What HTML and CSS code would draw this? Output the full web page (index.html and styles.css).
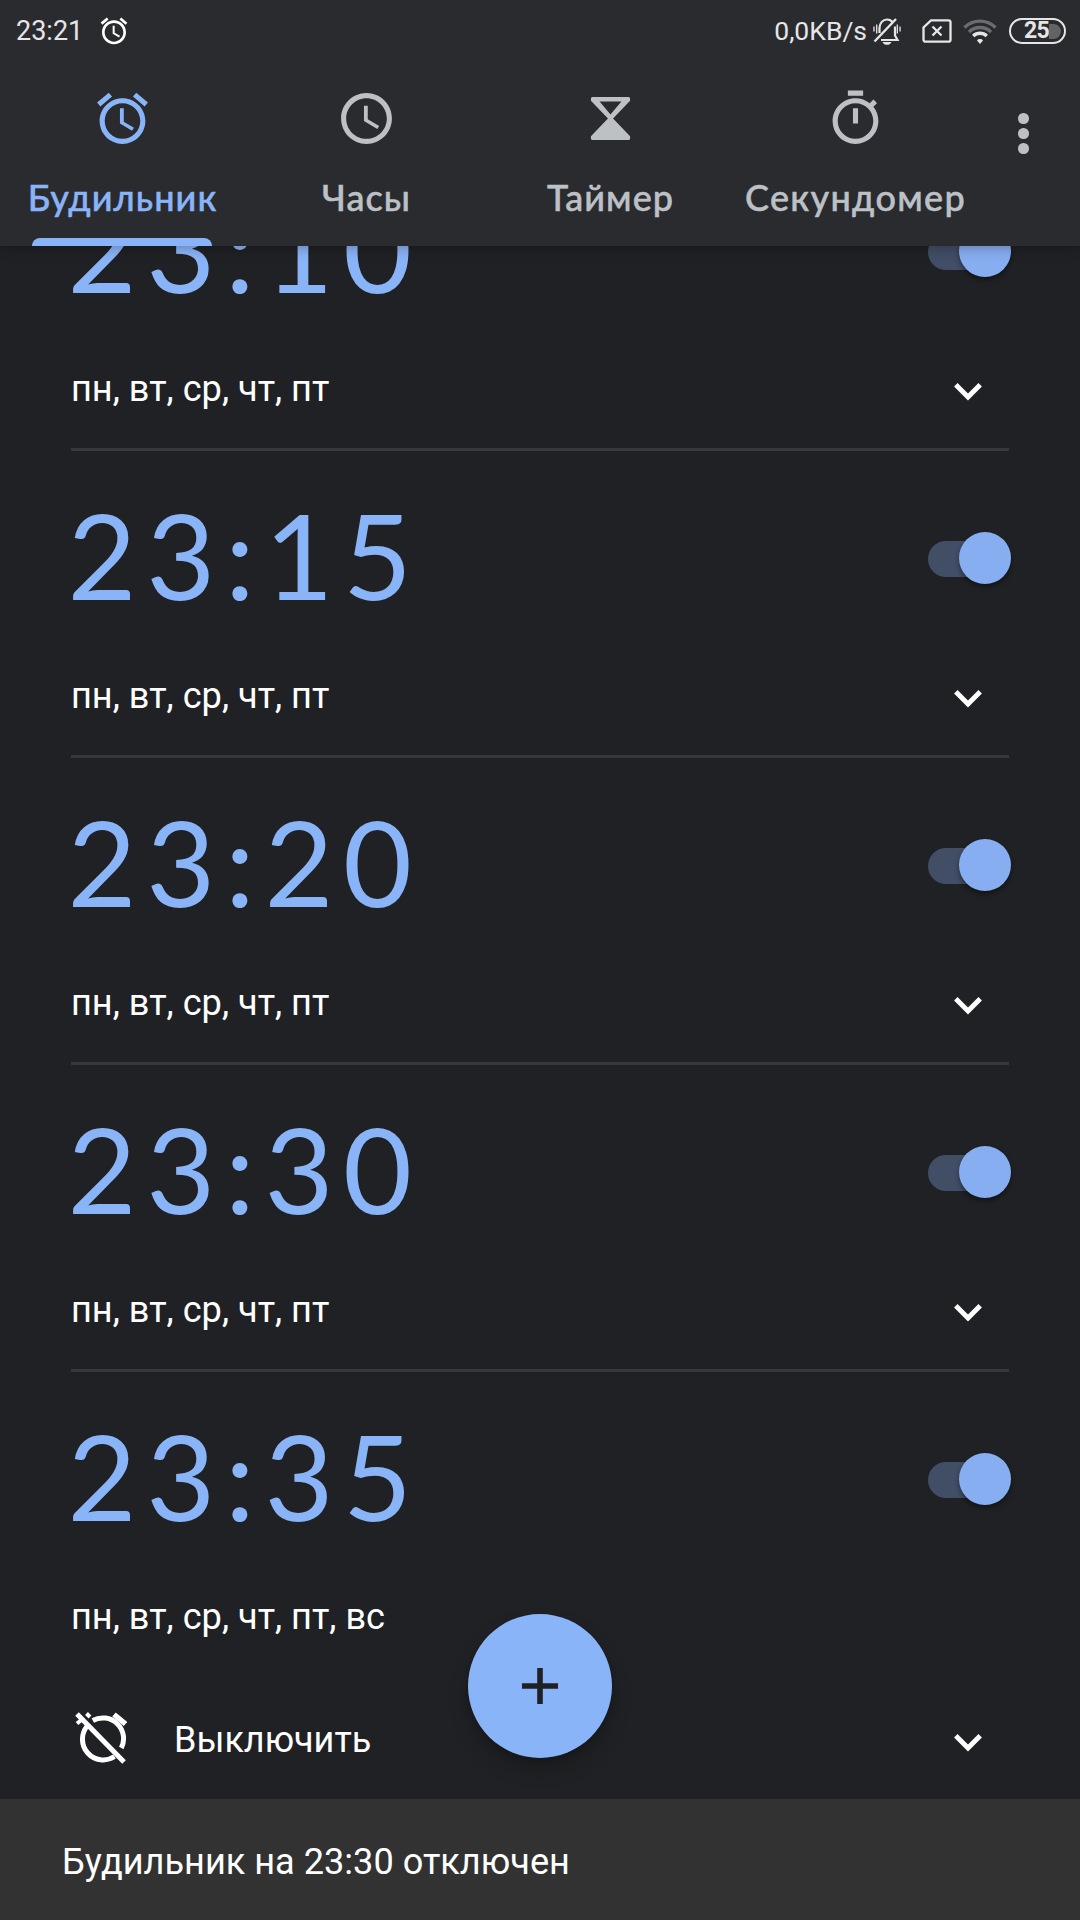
FILE: index.html
```html
<!DOCTYPE html>
<html lang="ru">
<head>
<meta charset="utf-8">
<title>Часы</title>
<link rel="stylesheet" href="styles.css">
</head>
<body>
<svg class="sprite" aria-hidden="true">
  <symbol id="alarm" viewBox="0 0 24 24"><path d="M22 5.72l-4.6-3.86-1.29 1.53 4.6 3.86L22 5.72zM7.88 3.39L6.6 1.86 2 5.71l1.29 1.53 4.59-3.85zM12.5 8H11v6l4.75 2.85.75-1.23-4-2.37V8zM12 4c-4.97 0-9 4.03-9 9s4.02 9 9 9c4.97 0 9-4.03 9-9s-4.03-9-9-9zm0 16c-3.87 0-7-3.13-7-7s3.13-7 7-7 7 3.13 7 7-3.13 7-7 7z"/></symbol>
  <symbol id="chevron" viewBox="0 0 28 18"><path d="M1.800 1.800L14 14L26.200 1.800" fill="none" stroke="currentColor" stroke-width="4.900"/></symbol>
</svg>
<div class="screen">
  <header class="header">
    <div class="status">
      <span class="status-time">23:21</span>
      <svg class="status-alarm"><use href="#alarm"/></svg>
      <span class="status-speed">0,0KB/s</span>
      <svg class="status-bell" viewBox="0 0 28 28" fill="none" stroke="currentColor" stroke-width="2.200">
        <path d="M6.500 16V11c0-5 3.500-8.500 7.500-8.500 2.500 0 4.500 1 6 3M22 9.500v9l2.500 4.500H8"/>
        <path d="M1.500 24.500L23 2" stroke-width="2.400"/>
        <path d="M1 9.500v5M3.700 7.500v9M24.300 7.500v9M27 9.500v5" stroke-width="1.300"/>
        <path d="M9.500 25h9c-1 2-2.500 2.800-4.500 2.800S10.500 27 9.500 25z" fill="currentColor" stroke="none"/>
      </svg>
      <svg class="status-sim" viewBox="0 0 30 24" fill="none" stroke="currentColor" stroke-width="2.300">
        <path d="M9 1.300h17.500a2 2 0 0 1 2 2v17.400a2 2 0 0 1-2 2h-23a2 2 0 0 1-2-2V8.500z"/>
        <path d="M10.500 7.500l9 9M19.500 7.500l-9 9"/>
      </svg>
      <svg class="status-wifi" viewBox="0 0 34 26" fill="none" stroke="currentColor" stroke-width="3.400">
        <path d="M1.500 9.500a22 22 0 0 1 31 0" opacity=".35"/>
        <path d="M6 14a15.600 15.600 0 0 1 22 0" opacity=".35"/>
        <path d="M10.200 18a9.800 9.800 0 0 1 13.600 0"/>
        <path d="M17 26l-3-3.500c1.500-1.900 4.500-1.900 6 0z" fill="currentColor" stroke="none"/>
      </svg>
      <span class="battery"><span class="battery-value">25</span><span class="battery-rest"></span></span>
    </div>
    <nav class="tabs">
      <a class="tab tab-active">
        <svg class="tab-icon"><use href="#alarm"/></svg>
        <span class="tab-label">Будильник</span>
      </a>
      <a class="tab">
        <svg class="tab-icon" viewBox="0 0 24 24"><path d="M11.990 2C6.470 2 2 6.480 2 12s4.470 10 9.990 10C17.520 22 22 17.520 22 12S17.520 2 11.990 2zM12 20c-4.420 0-8-3.580-8-8s3.580-8 8-8 8 3.580 8 8-3.580 8-8 8zm.5-13H11v6l5.250 3.150.750-1.230-4.500-2.670z"/></svg>
        <span class="tab-label">Часы</span>
      </a>
      <a class="tab">
        <svg class="tab-icon" viewBox="0 0 24 24"><path fill-rule="evenodd" d="M4.900 3.500h14.200q.6 0 .6.600v.9L13 12l6.700 7v.9q0 .6-.6.600H4.900q-.6 0-.6-.6V19L11 12 4.300 5v-.9q0-.6.600-.6zM7.700 5.300L12 10.400l4.300-5.100z"/></svg>
        <span class="tab-label">Таймер</span>
      </a>
      <a class="tab">
        <svg class="tab-icon" viewBox="0 0 24 24"><path d="M15 1H9v2h6V1zm-4 13h2V8h-2v6zm8.030-6.610l1.420-1.420c-.43-.51-.9-.99-1.410-1.410l-1.420 1.420C16.070 4.740 14.120 4 12 4c-4.970 0-9 4.030-9 9s4.020 9 9 9 9-4.030 9-9c0-2.120-.74-4.070-1.970-5.610zM12 20c-3.870 0-7-3.130-7-7s3.130-7 7-7 7 3.130 7 7-3.130 7-7 7z"/></svg>
        <span class="tab-label tab-label-wide">Секундомер</span>
      </a>
      <span class="more"><i></i><i></i><i></i></span>
    </nav>
  </header>

  <main class="list">
    <section class="alarm">
      <div class="alarm-main"><span class="time">23:10</span><span class="switch"><i class="thumb"></i></span></div>
      <div class="alarm-days"><span>пн, вт, ср, чт, пт</span><svg class="chevron"><use href="#chevron"/></svg></div>
    </section>
    <section class="alarm">
      <div class="alarm-main"><span class="time">23:15</span><span class="switch"><i class="thumb"></i></span></div>
      <div class="alarm-days"><span>пн, вт, ср, чт, пт</span><svg class="chevron"><use href="#chevron"/></svg></div>
    </section>
    <section class="alarm">
      <div class="alarm-main"><span class="time">23:20</span><span class="switch"><i class="thumb"></i></span></div>
      <div class="alarm-days"><span>пн, вт, ср, чт, пт</span><svg class="chevron"><use href="#chevron"/></svg></div>
    </section>
    <section class="alarm">
      <div class="alarm-main"><span class="time">23:30</span><span class="switch"><i class="thumb"></i></span></div>
      <div class="alarm-days"><span>пн, вт, ср, чт, пт</span><svg class="chevron"><use href="#chevron"/></svg></div>
    </section>
    <section class="alarm alarm-last">
      <div class="alarm-main"><span class="time">23:35</span><span class="switch"><i class="thumb"></i></span></div>
      <div class="alarm-days"><span>пн, вт, ср, чт, пт, вс</span></div>
      <div class="alarm-off">
        <svg class="off-icon" viewBox="0 0 52 52" fill="none" stroke="currentColor" stroke-width="5">
          <path d="M17.800 8.500A20.700 20.700 0 0 1 46.300 36M39.500 44.500A20.700 20.700 0 0 1 12.200 14"/>
          <path d="M2 2L49 50"/>
          <path d="M39 2.500L50.500 12" stroke-width="5.500"/>
          <path d="M11.500 1.500l3.500 3.500M2 11.500l5-4" stroke-width="4"/>
        </svg>
        <span class="off-label">Выключить</span>
        <svg class="chevron"><use href="#chevron"/></svg>
      </div>
    </section>
  </main>

  <button class="fab" aria-label="Добавить"><svg viewBox="0 0 36 36"><path d="M18 0v36M0 18h36" stroke="#202124" stroke-width="5.600"/></svg></button>
  <footer class="snackbar">Будильник на 23:30 отключен</footer>
</div>
</body>
</html>
```

FILE: styles.css
```css
* { box-sizing: border-box; }

body {
  margin: 0;
  background: #202124;
  color: #fff;
  font-family: Roboto, "Liberation Sans", sans-serif;
}

.sprite { display: none; }

.screen {
  position: relative;
  display: flex;
  flex-direction: column;
  width: 1080px;
  height: 1920px;
  overflow: hidden;
}

svg { flex: none; fill: currentColor; }
svg[fill="none"] { fill: none; }

.header {
  z-index: 1;
  flex: none;
  height: 246px;
  background: #2a2b2f;
  box-shadow: 0 2px 12px rgba(0, 0, 0, .28);
}

/* status bar */
.status {
  display: flex;
  align-items: center;
  height: 62px;
  padding: 0 14px 0 16px;
  color: #e6e6e6;
  font-size: 27px;
  line-height: 32px;
}
.status-alarm { width: 32px; height: 32px; margin-left: 15px; color: #fff; }
.status-speed { margin-left: auto; font-size: 26.5px; }
.status-bell { width: 28px; height: 28px; margin-left: 6px; }
.status-sim { width: 30px; height: 24px; margin-left: 21px; }
.status-wifi { width: 34px; height: 26px; margin-left: 11px; }
.battery {
  display: flex;
  align-items: center;
  justify-content: flex-end;
  width: 57px;
  height: 26px;
  margin-left: 12px;
  padding-right: 3px;
  border: 2.5px solid #e6e6e6;
  border-radius: 13px;
}
.battery-value { font-size: 23px; font-weight: 700; line-height: 22px; letter-spacing: -.7px; }
.battery-rest { width: 12px; height: 15px; border-radius: 0 8px 8px 0; background: #626365; }

/* tabs */
.tabs {
  display: grid;
  grid-template-columns: repeat(3, 244px) 246px 1fr;
  height: 184px;
  color: #bdc1c6;
}
.tab {
  position: relative;
  display: flex;
  flex-direction: column;
  align-items: center;
  padding-top: 26px;
}
.tab-active { color: #8ab4f8; }
.tab-active::after {
  content: "";
  position: absolute;
  left: 32px;
  bottom: 0;
  width: 180px;
  height: 8px;
  border-radius: 8px 8px 0 0;
  background: #8ab4f8;
}
.tab-icon { width: 61px; height: 61px; }
.tab-label {
  margin: 25px 0 0 1px;
  font-family: Lato, Roboto, sans-serif;
  font-size: 36px;
  font-weight: 500;
  line-height: 46px;
  letter-spacing: 1.05px;
  -webkit-text-stroke: .5px currentColor;
}
.tab-label-wide { letter-spacing: 1.3px; }
.more {
  display: flex;
  flex-direction: column;
  align-items: center;
  gap: 4.500px;
  padding: 51px 11px 0 0;
}
.more i { width: 10.500px; height: 10.500px; border-radius: 50%; background: #bdc1c6; }

/* alarm list */
.list {
  flex: none;
  height: 1553px;
  overflow: hidden;
  padding: 0 71px;
}
.alarm {
  height: 307px;
  border-bottom: 3px solid #37383c;
}
.alarm:first-child { margin-top: -102px; }
.alarm-last { height: 427px; border: 0; }
.alarm-main {
  display: flex;
  align-items: center;
  justify-content: space-between;
  height: 212px;
}
.time {
  margin-left: -3.500px;
  padding-bottom: 6px;
  color: #8ab4f8;
  font-family: Lato, "Open Sans", sans-serif;
  font-size: 119px;
  line-height: 90px;
  letter-spacing: 9.700px;
}
.switch {
  display: flex;
  align-items: center;
  justify-content: flex-end;
  width: 82px;
  height: 36px;
  margin: 3px -.5px 0 0;
  border-radius: 18px;
  background: #414e66;
}
.thumb {
  flex: none;
  width: 52px;
  height: 52px;
  margin: 0 -1px 2px 0;
  border-radius: 50%;
  background: #87aef0;
  box-shadow: 0 3px 5px rgba(0, 0, 0, .4);
}
.alarm-days {
  display: flex;
  align-items: center;
  justify-content: space-between;
  height: 72px;
  padding-right: 27.500px;
  font-size: 36.150px;
}
.alarm-days span { padding-bottom: 8px; }
.chevron { width: 28px; height: 18px; }
.alarm-off {
  display: flex;
  align-items: center;
  height: 80px;
  margin-top: 47px;
  padding: 0 27.500px 0 4px;
  font-size: 36px;
}
.off-icon { width: 52px; height: 52px; margin-bottom: 11px; }
.off-label { margin-left: 47px; padding-bottom: 7px; }
.alarm-off .chevron { margin-left: auto; }

/* floating action button over the list */
.fab {
  position: absolute;
  left: 468px;
  top: 1614px;
  display: flex;
  align-items: center;
  justify-content: center;
  width: 144px;
  height: 144px;
  padding: 0;
  border: 0;
  border-radius: 50%;
  background: #8ab4f8;
  box-shadow: 0 12px 20px rgba(0, 0, 0, .2), 0 3px 5px rgba(0, 0, 0, .15);
}
.fab svg { width: 36px; height: 36px; }

.snackbar {
  z-index: 1;
  display: flex;
  align-items: center;
  height: 121px;
  padding: 4px 62px 0;
  background: #323232;
  font-size: 36.150px;
}
```
